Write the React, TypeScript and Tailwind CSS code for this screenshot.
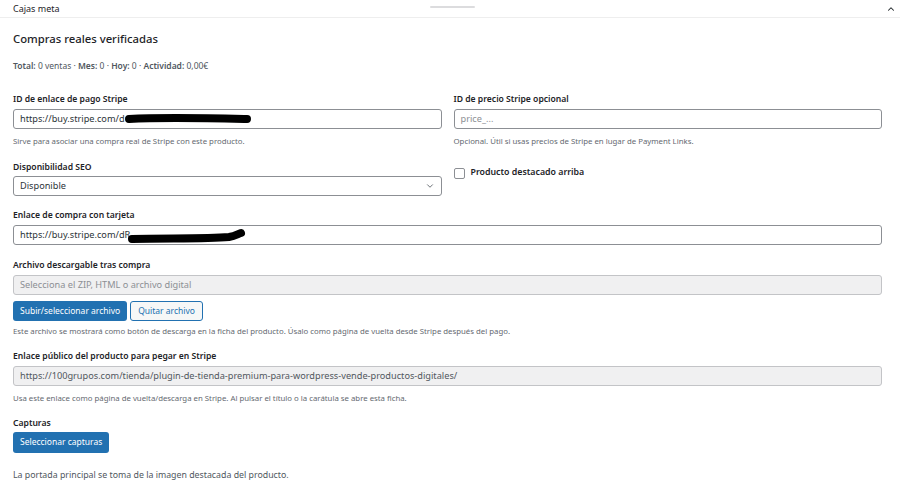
import { ChevronDown, ChevronUp } from "lucide-react";

const font = { fontFamily: '"Noto Sans", "Open Sans", sans-serif' };

const Label = ({ children, tight }: { children: React.ReactNode; tight?: boolean }) => (
  <div className={`text-[8.6px] font-semibold text-[#1d2327] leading-[12px] ${tight ? "mb-[3px]" : "mb-[4px]"}`}>
    {children}
  </div>
);

const Help = ({ children, tight }: { children: React.ReactNode; tight?: boolean }) => (
  <p className={`text-[7.8px] text-[#646970] leading-[11px] ${tight ? "mt-[5px]" : "mt-[7px]"}`}>{children}</p>
);

const TextInput = ({
  value,
  placeholder,
  disabled,
  children,
}: {
  value?: string;
  placeholder?: string;
  disabled?: boolean;
  children?: React.ReactNode;
}) => (
  <div
    className={`relative h-[20px] rounded-[3px] border flex items-center px-[6px] text-[9.2px] ${
      disabled ? "bg-[#f0f0f1] border-[#c3c4c7] text-[#50575e]" : "bg-white border-[#8c8f94] text-[#2c3338]"
    }`}
  >
    {value ? <span className="whitespace-nowrap">{value}</span> : <span className="text-[#8c8f94]">{placeholder}</span>}
    {children}
  </div>
);

const Scribble = ({ d, w, h, left, top }: { d: string; w: number; h: number; left: string; top: string }) => (
  <svg width={w} height={h} viewBox={`0 0 ${w} ${h}`} className={`absolute ${left} ${top}`}>
    <path d={d} stroke="#000" strokeWidth="8" strokeLinecap="round" fill="none" />
  </svg>
);

export default function App() {
  return (
    <div className="w-[900px] h-[504px] bg-white overflow-hidden" style={font}>
      {/* header */}
      <div className="relative h-[18px] border-b border-[#eeeeee] flex items-center justify-between pl-[13px] pr-[4px]">
        <span className="text-[9px] text-[#1d2327]">Cajas meta</span>
        <div className="absolute left-[430px] top-[6px] w-[45px] h-[2px] bg-[#dcdcde] rounded-full" />
        <ChevronUp className="w-[10px] h-[10px] text-[#1d2327]" strokeWidth={2.5} />
      </div>

      <div className="pl-[13px] pr-[18px] pt-[13px]">
        <h2 className="text-[11.3px] font-medium text-[#1d2327] leading-[16px]">Compras reales verificadas</h2>
        <p className="text-[8.5px] text-[#50575e] mt-[13px] leading-[12px]">
          <b className="font-semibold">Total:</b> 0 ventas · <b className="font-semibold">Mes:</b> 0 ·{" "}
          <b className="font-semibold">Hoy:</b> 0 · <b className="font-semibold">Actividad:</b> 0,00€
        </p>

        <div className="grid grid-cols-2 gap-x-[12px] mt-[21px]">
          <div>
            <Label>ID de enlace de pago Stripe</Label>
            <TextInput value="https://buy.stripe.com/d">
              <Scribble w={128} h={14} left="left-[110px]" top="top-[2px]" d="M5 7 C40 5 80 6 123 7" />
            </TextInput>
            <Help>Sirve para asociar una compra real de Stripe con este producto.</Help>
          </div>
          <div>
            <Label>ID de precio Stripe opcional</Label>
            <TextInput placeholder="price_..." />
            <Help>Opcional. Útil si usas precios de Stripe en lugar de Payment Links.</Help>
          </div>

          <div className="mt-[14px]">
            <Label tight>Disponibilidad SEO</Label>
            <div className="h-[20px] rounded-[3px] border border-[#8c8f94] flex items-center justify-between px-[6px] text-[9.2px] text-[#2c3338]">
              <span>Disponible</span>
              <ChevronDown className="w-[10px] h-[10px] text-[#50575e]" strokeWidth={2} />
            </div>
          </div>
          <div className="mt-[20px] flex items-center gap-[6px] h-[12px]">
            <div className="w-[11px] h-[11px] rounded-[2px] border border-[#8c8f94] bg-white" />
            <span className="text-[8.8px] font-semibold text-[#1d2327]">Producto destacado arriba</span>
          </div>
        </div>

        <div className="mt-[13px]">
          <Label>Enlace de compra con tarjeta</Label>
          <TextInput value="https://buy.stripe.com/dR">
            <Scribble w={120} h={18} left="left-[113px]" top="top-[1px]" d="M5 12 C40 11 78 12 102 10 C108 9 111 7 114 6" />
          </TextInput>
        </div>

        <div className="mt-[14px]">
          <Label>Archivo descargable tras compra</Label>
          <TextInput disabled placeholder="Selecciona el ZIP, HTML o archivo digital" />
          <div className="flex gap-[3px] mt-[6px]">
            <button className="h-[20px] px-[7px] rounded-[3px] bg-[#2271b1] text-white text-[8.5px] leading-none">
              Subir/seleccionar archivo
            </button>
            <button className="h-[20px] px-[7px] rounded-[3px] border border-[#2271b1] bg-[#f6f7f7] text-[#2271b1] text-[8.5px] leading-none">
              Quitar archivo
            </button>
          </div>
          <Help tight>
            Este archivo se mostrará como botón de descarga en la ficha del producto. Úsalo como página de vuelta desde
            Stripe después del pago.
          </Help>
        </div>

        <div className="mt-[13px]">
          <Label>Enlace público del producto para pegar en Stripe</Label>
          <TextInput disabled value="https://100grupos.com/tienda/plugin-de-tienda-premium-para-wordpress-vende-productos-digitales/" />
          <Help>Usa este enlace como página de vuelta/descarga en Stripe. Al pulsar el título o la carátula se abre esta ficha.</Help>
        </div>

        <div className="mt-[13px] flex flex-col items-start">
          <Label tight>Capturas</Label>
          <button className="block h-[21px] px-[7px] rounded-[3px] bg-[#2271b1] text-white text-[8.5px] leading-none">
            Seleccionar capturas
          </button>
          <p className="text-[8.8px] text-[#50575e] mt-[16px] leading-[12px]">
            La portada principal se toma de la imagen destacada del producto.
          </p>
        </div>
      </div>
    </div>
  );
}
